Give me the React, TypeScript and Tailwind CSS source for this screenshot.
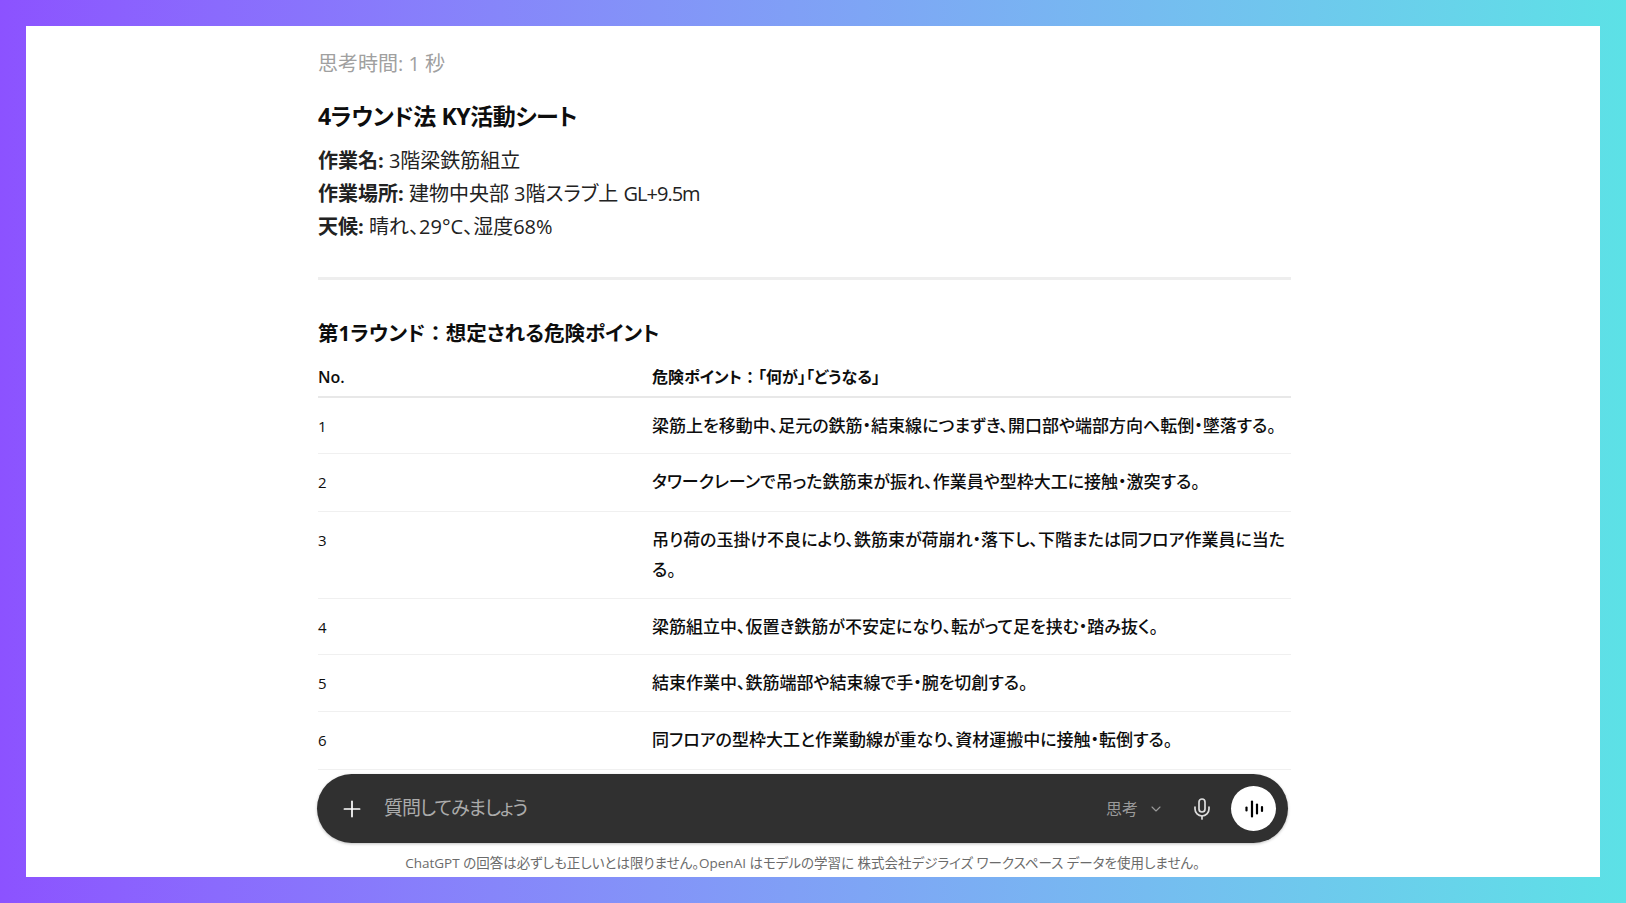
import React from 'react';
import { Plus, ChevronDown, Mic } from 'lucide-react';

const rows = [
  { no: '1', text: '梁筋上を移動中、足元の鉄筋・結束線につまずき、開口部や端部方向へ転倒・墜落する。', h: 'h-[56px]' },
  { no: '2', text: 'タワークレーンで吊った鉄筋束が振れ、作業員や型枠大工に接触・激突する。', h: 'h-[58px]' },
  { no: '3', text: '吊り荷の玉掛け不良により、鉄筋束が荷崩れ・落下し、下階または同フロア作業員に当たる。', h: 'h-[87px]' },
  { no: '4', text: '梁筋組立中、仮置き鉄筋が不安定になり、転がって足を挟む・踏み抜く。', h: 'h-[56px]' },
  { no: '5', text: '結束作業中、鉄筋端部や結束線で手・腕を切創する。', h: 'h-[57px]' },
  { no: '6', text: '同フロアの型枠大工と作業動線が重なり、資材運搬中に接触・転倒する。', h: 'h-[58px]' },
];

const Waveform = () => (
  <svg width="20" height="20" viewBox="0 0 20 20" fill="none" stroke="#000" strokeWidth="2.2" strokeLinecap="round">
    <path d="M2.5 8.5v3" />
    <path d="M8 2.5v15" />
    <path d="M13 5.5v9" />
    <path d="M18 8v4" />
  </svg>
);

export default function App() {
  return (
    <div
      className="w-[1626px] h-[903px] p-[26px] overflow-hidden bg-gradient-to-r from-[#8c52ff] to-[#5ce1e6] text-[#0d0d0d] [font-feature-settings:'palt']"
      style={{ fontFamily: '"Open Sans", "Noto Sans CJK JP", sans-serif' }}
    >
      <div className="h-full bg-white overflow-hidden flex flex-col">
        <div className="w-[973px] ml-[292px] flex flex-col">
          <p className="mt-[23px] text-[20px] leading-[30px] text-[#a0a0a0]">思考時間: 1 秒</p>
          <h2 className="mt-[21px] text-[23px] leading-[32px] font-bold tracking-[-0.4px]">4ラウンド法 KY活動シート</h2>
          <div className="mt-[12px] text-[20px] leading-[33px] text-[#222]">
            <p><b>作業名:</b> 3階梁鉄筋組立</p>
            <p><b>作業場所:</b> 建物中央部 3階スラブ上 <span className="tracking-[-1px]">GL+9.5m</span></p>
            <p><b>天候:</b> 晴れ、29°C、湿度68%</p>
          </div>
          <hr className="mt-[34px] border-0 h-[3px] bg-[#eeeeee]" />
          <h3 className="mt-[38px] text-[20.5px] leading-[30px] font-bold">
            第1ラウンド<span className="[font-feature-settings:normal]">：</span>想定される危険ポイント
          </h3>
          <div className="mt-[12px] flex h-[38px] items-center border-b-2 border-[#e8e8e8] text-[16px] font-semibold pb-[2px]">
            <div className="w-[334px]">No.</div>
            <div className="flex-1">
              危険ポイント<span className="[font-feature-settings:normal]">：</span>「何が」「どうなる」
            </div>
          </div>
          {rows.map((r) => (
            <div key={r.no} className={`flex items-start pt-[13px] border-b border-[#f0f0f0] ${r.h}`}>
              <div className="w-[334px] text-[15px] leading-[30px]">{r.no}</div>
              <div className="flex-1 text-[17px] leading-[30px] font-medium">{r.text}</div>
            </div>
          ))}
        </div>
        <div className="mt-[4px] ml-[291px] w-[971px] h-[69px] shrink-0 rounded-full bg-[#303030] flex items-center pl-[22px] pr-[12px] text-[#ababab] shadow-[0_1px_3px_rgba(0,0,0,0.25)]">
          <Plus size={26} strokeWidth={1.6} className="text-white shrink-0" />
          <span className="ml-[19px] text-[19px] tracking-[-1px]">質問してみましょう</span>
          <span className="ml-auto text-[16px] text-[#9a9a9a]">思考</span>
          <ChevronDown size={16} strokeWidth={1.6} className="ml-[10px] text-[#9a9a9a]" />
          <Mic size={24} strokeWidth={1.7} className="ml-[26px] text-[#dddddd]" />
          <div className="ml-[17px] w-[45px] h-[45px] rounded-full bg-white flex items-center justify-center">
            <Waveform />
          </div>
        </div>
        <p className="mt-[10px] ml-[291px] w-[971px] text-center text-[13.5px] leading-[20px] text-[#6b6b6b]">
          ChatGPT の回答は必ずしも正しいとは限りません。OpenAI はモデルの学習に 株式会社デジライズ ワークスペース データを使用しません。
        </p>
      </div>
    </div>
  );
}
